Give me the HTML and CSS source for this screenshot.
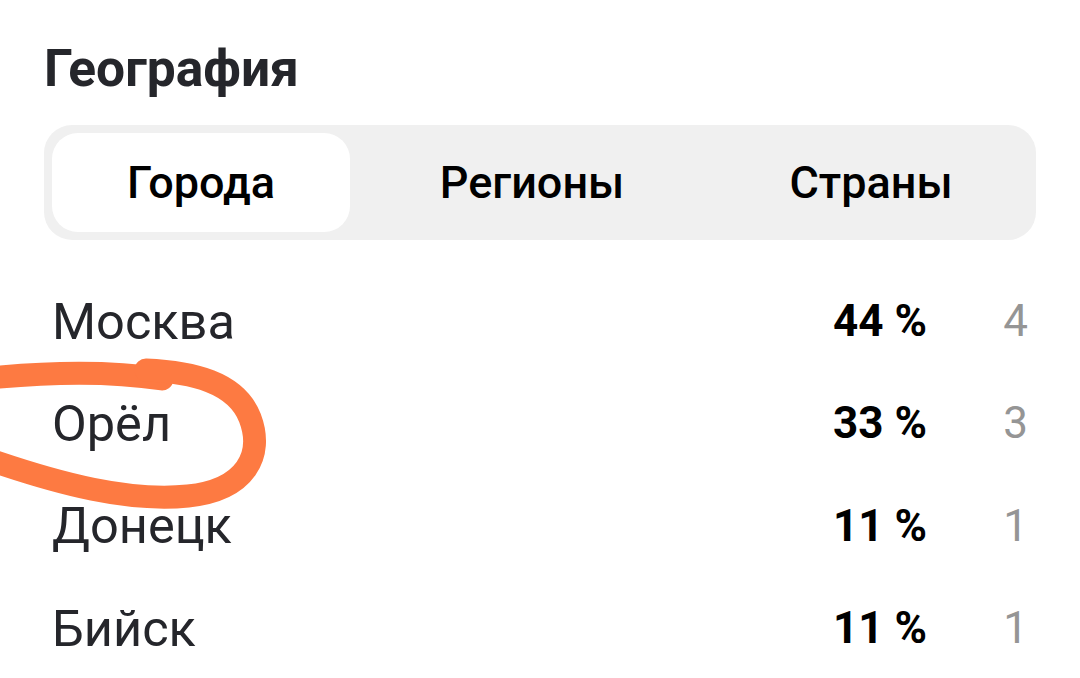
FILE: index.html
```html
<!DOCTYPE html>
<html lang="ru">
<head>
<meta charset="utf-8">
<title>География</title>
<link rel="stylesheet" href="styles.css">
</head>
<body>
<main class="geo">
  <h1 class="geo-title">География</h1>
  <div class="seg">
    <div class="seg-tab seg-tab-active">Города</div>
    <div class="seg-tab">Регионы</div>
    <div class="seg-tab">Страны</div>
  </div>
  <ul class="list">
    <li class="row"><span class="name">Москва</span><span class="pct">44 %</span><span class="cnt">4</span></li>
    <li class="row"><span class="name">Орёл</span><span class="pct">33 %</span><span class="cnt">3</span></li>
    <li class="row"><span class="name">Донецк</span><span class="pct">11 %</span><span class="cnt">1</span></li>
    <li class="row"><span class="name">Бийск</span><span class="pct">11 %</span><span class="cnt">1</span></li>
  </ul>
</main>
<svg class="mark" width="1080" height="678" viewBox="0 0 1080 678" xmlns="http://www.w3.org/2000/svg">
  <path d="M-10,378 C50,372 110,371 162,379" fill="none" stroke="#fd7a42" stroke-width="23" stroke-linecap="round"/>
  <path d="M146,370 C192,372 236,382 250,418 C264,455 246,490 188,496 C128,502 60,484 -10,460" fill="none" stroke="#fd7a42" stroke-width="23" stroke-linecap="round" stroke-linejoin="round"/>
</svg>
</body>
</html>
```

FILE: styles.css
```css
html, body {
  margin: 0;
  padding: 0;
  background: #ffffff;
}

body {
  width: 1080px;
  height: 678px;
  overflow: hidden;
  position: relative;
  font-family: Roboto, "Noto Sans", "Liberation Sans", sans-serif;
}

.geo {
  padding: 39px 44px 0 44px;
}

.geo-title {
  margin: 0;
  font-size: 51.5px;
  line-height: 60px;
  font-weight: 700;
  color: #25262b;
}

.seg {
  margin-top: 26px;
  background: #f0f0f0;
  border-radius: 28px;
  padding: 8px;
  display: grid;
  grid-template-columns: 298px 364px 1fr;
}

.seg-tab {
  height: 99px;
  line-height: 99px;
  text-align: center;
  font-size: 45px;
  font-weight: 500;
  color: #000000;
  border-radius: 26px;
}

.seg-tab-active {
  background: #ffffff;
}

.list {
  list-style: none;
  margin: 30px 0 0 0;
  padding: 0 8px;
}

.row {
  height: 102.33px;
  display: flex;
  align-items: center;
}

.name {
  flex: 1;
  font-size: 50.5px;
  color: #25262b;
}

.pct {
  font-size: 44px;
  font-weight: 700;
  color: #000000;
}

.cnt {
  width: 101px;
  text-align: right;
  font-size: 44px;
  color: #959595;
}

.mark {
  position: absolute;
  left: 0;
  top: 0;
  pointer-events: none;
}
```
